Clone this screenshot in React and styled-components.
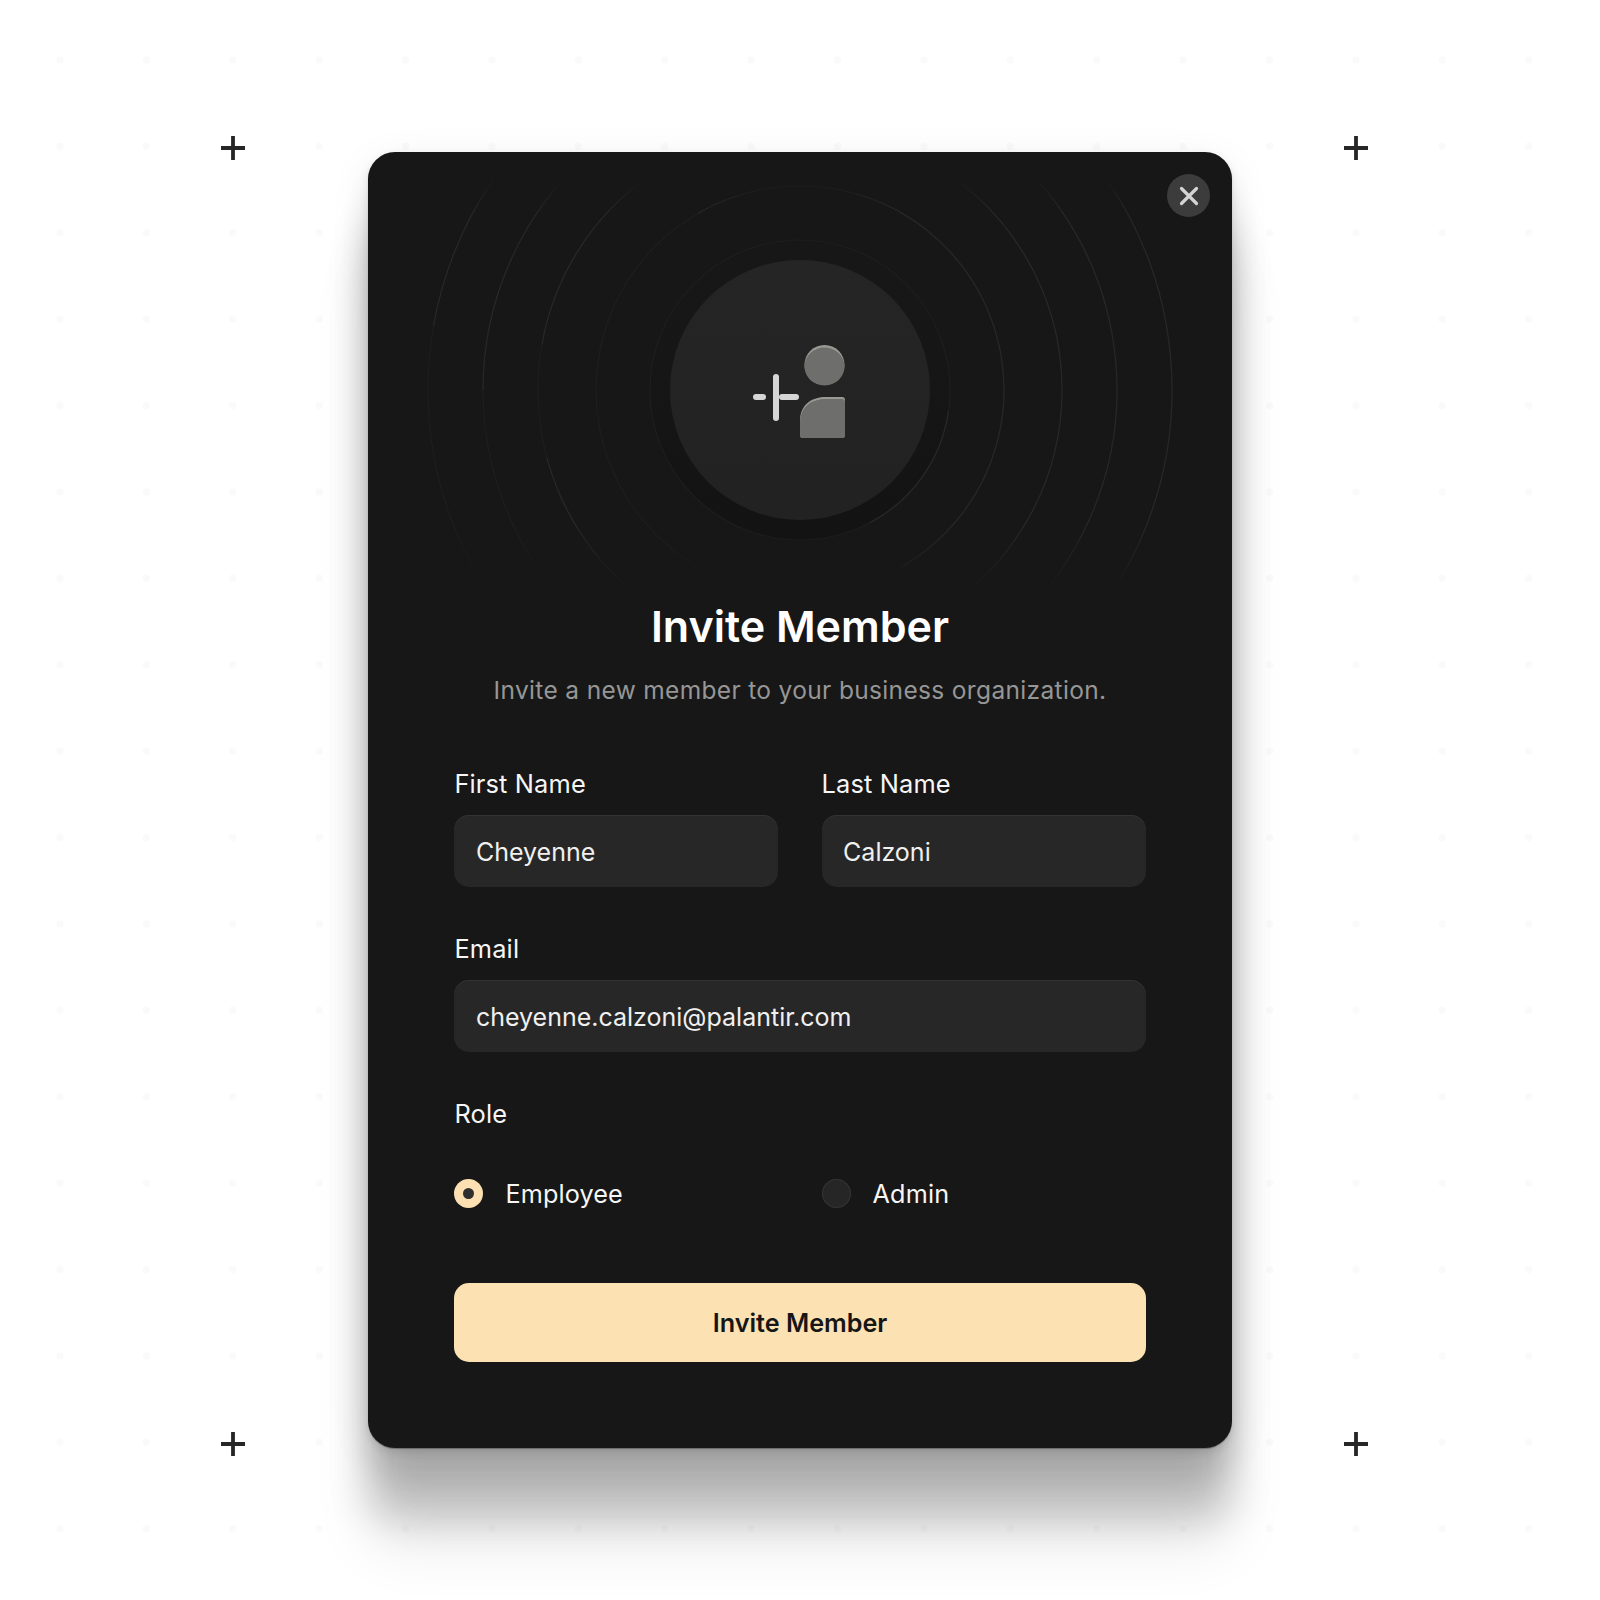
import React from "react";
import styled, { createGlobalStyle } from "styled-components";

const GlobalStyle = createGlobalStyle`
  html, body {
    margin: 0;
    padding: 0;
    background: #ffffff;
  }
`;

const Page = styled.div`
  position: relative;
  width: 1600px;
  height: 1600px;
  box-sizing: border-box;
  padding-top: 152px;
  display: flex;
  justify-content: center;
  align-items: flex-start;
  overflow: hidden;
  font-family: Inter, "Liberation Sans", sans-serif;
  background-color: #ffffff;
  background-image: radial-gradient(circle, #fafafa 3.5px, transparent 4px);
  background-size: 86.4px 86.4px;
  background-position: 16.8px 16.8px;
`;

const Corner = styled.svg`
  position: absolute;
  width: 26px;
  height: 26px;
  left: ${(p) => p.$x - 13}px;
  top: ${(p) => p.$y - 12.500}px;
`;

const Card = styled.section`
  position: relative;
  width: 864px;
  height: 1296px;
  box-sizing: border-box;
  padding: 0 86.4px 86px;
  display: flex;
  flex-direction: column;
  border-radius: 27px;
  background: #171717;
  box-shadow: 0 1px 1px rgba(0, 0, 0, 0.3), 0 4px 10px rgba(0, 0, 0, 0.1),
    0 10px 40px rgba(0, 0, 0, 0.08), 0 30px 30px rgba(0, 0, 0, 0.08),
    0 70px 40px rgba(0, 0, 0, 0.2), 0 100px 60px rgba(0, 0, 0, 0.08);
`;

const CloseButton = styled.button`
  position: absolute;
  top: 22px;
  right: 22px;
  width: 43px;
  height: 43px;
  padding: 0;
  border: none;
  border-radius: 50%;
  background: #3c3c3c;
  display: flex;
  align-items: center;
  justify-content: center;
`;

const Hero = styled.div`
  position: relative;
  height: 448px;
  margin: 0 -86.4px;
  display: flex;
  justify-content: center;
  padding-top: 108px;
  box-sizing: border-box;
`;

const Rings = styled.svg`
  position: absolute;
  left: 0;
  top: 0;
  width: 864px;
  height: 452px;
`;

const Avatar = styled.div`
  position: relative;
  width: 260px;
  height: 260px;
  border-radius: 50%;
  background: linear-gradient(180deg, #252525 0%, #222222 100%);
  display: flex;
  align-items: center;
  justify-content: center;
`;

const Title = styled.h1`
  margin: 0;
  text-align: center;
  font-size: 43px;
  line-height: 52px;
  font-weight: 600;
  color: #ffffff;
`;

const Subtitle = styled.p`
  margin: 19px 0 0;
  text-align: center;
  font-size: 24.5px;
  line-height: 38px;
  letter-spacing: 0.34px;
  color: #969696;
`;

const Form = styled.form`
  margin-top: 58px;
  display: flex;
  flex-direction: column;
  gap: 45px;
`;

const Row = styled.div`
  display: grid;
  grid-template-columns: 324px 324px;
  column-gap: 43.2px;
`;

const Field = styled.div`
  display: flex;
  flex-direction: column;
  gap: 14px;
`;

const Label = styled.label`
  font-size: 25.4px;
  line-height: 34px;
  font-weight: 400;
  letter-spacing: 0.15px;
  color: #f6f6f6;
`;

const Input = styled.div`
  height: 72px;
  box-sizing: border-box;
  padding: 2px 21.5px 0;
  display: flex;
  align-items: center;
  border-radius: 15px;
  background: #272727;
  box-shadow: inset 0 1px 0 #333333;
  font-size: 25px;
  color: #f0f0f0;
`;

const RadioOption = styled.div`
  display: flex;
  align-items: center;
  gap: 22px;
  font-size: 25.2px;
  font-weight: 400;
  letter-spacing: 0.15px;
  color: #f6f6f6;
`;

const RadioText = styled.span`
  padding-top: 2px;
`;

const RadioMark = styled.span`
  width: 29px;
  height: 29px;
  border-radius: 50%;
  box-sizing: border-box;
  background: ${(p) => (p.$checked ? "#fce0b1" : "#262626")};
  box-shadow: ${(p) => (p.$checked ? "none" : "inset 0 0 0 1px #333333")};
  display: flex;
  align-items: center;
  justify-content: center;
  &::after {
    content: "";
    display: ${(p) => (p.$checked ? "block" : "none")};
    width: 11px;
    height: 11px;
    border-radius: 50%;
    background: #2f2f2f;
  }
`;

const RadioRow = styled(Row)`
  margin-top: 44px;
  height: 36px;
  align-items: center;
`;

const SubmitButton = styled.button`
  height: 79px;
  margin-top: 27px;
  padding-top: 2px;
  border: none;
  border-radius: 15px;
  background: #fce1b2;
  font-family: inherit;
  font-size: 25.2px;
  font-weight: 600;
  color: #161616;
`;

const corners = [
  [233, 147],
  [1356, 147],
  [233, 1443],
  [1356, 1443],
];

// radius of each ring, then its brighter arcs as [startDeg, endDeg]
const rings = [
  { r: 150, arcs: [[8, 62]] },
  { r: 204, arcs: [[-120, -30], [-30, 60]] },
  { r: 262, arcs: [[-170, -125], [125, 165], [-60, 60]] },
  { r: 317, arcs: [[-180, -132], [-60, 50]] },
  { r: 372, arcs: [[-170, -120], [-60, 50]] },
];

const arcPath = (r, a, b) => {
  const cx = 432;
  const cy = 238;
  const rad = (d) => (d * Math.PI) / 180;
  const x1 = cx + r * Math.cos(rad(a));
  const y1 = cy + r * Math.sin(rad(a));
  const x2 = cx + r * Math.cos(rad(b));
  const y2 = cy + r * Math.sin(rad(b));
  return `M${x1} ${y1}A${r} ${r} 0 ${b - a > 180 ? 1 : 0} 1 ${x2} ${y2}`;
};

function RingArt() {
  return (
    <Rings viewBox="0 0 864 452" fill="none">
      <defs>
        <linearGradient id="ringFade" x1="0" y1="0" x2="0" y2="1">
          <stop offset="0.05" stopColor="#000" />
          <stop offset="0.14" stopColor="#fff" />
          <stop offset="0.82" stopColor="#fff" />
          <stop offset="0.98" stopColor="#000" />
        </linearGradient>
        <linearGradient id="innerDisc" x1="0" y1="0" x2="0" y2="1">
          <stop offset="0.2" stopColor="#171717" />
          <stop offset="1" stopColor="#131313" />
        </linearGradient>
        <mask id="ringMask">
          <rect width="864" height="452" fill="url(#ringFade)" />
        </mask>
      </defs>
      <circle cx="432" cy="238" r="150" fill="url(#innerDisc)" />
      <g mask="url(#ringMask)" strokeWidth="1.2">
        {rings.map((ring) => (
          <g key={ring.r}>
            <circle cx="432" cy="238" r={ring.r} stroke="#1e1e1e" />
            {ring.arcs.map(([a, b]) => (
              <path key={a} d={arcPath(ring.r, a, b)} stroke="#282828" />
            ))}
          </g>
        ))}
      </g>
    </Rings>
  );
}

function PersonPlus() {
  return (
    <svg width="110" height="100" viewBox="0 0 110 100" fill="none">
      <circle cx="79.500" cy="25" r="20" fill="#9a9a95" />
      <ellipse cx="79.500" cy="26.500" rx="20" ry="19" fill="#6e6e6c" />
      <path d="M55 95V80c0-14 11-23 25-23h17c2 0 3 1 3 3v35c0 2-1 3-3 3H58c-2 0-3-1-3-3z" fill="#9a9a95" />
      <path d="M55 95V82c0-14 11-23 25-23h17c2 0 3 1 3 3v33c0 2-1 3-3 3H58c-2 0-3-1-3-3z" fill="#6e6e6c" />
      <path d="M11 57h7M37 57h14" stroke="#d6d6d6" strokeWidth="6" strokeLinecap="round" />
      <path d="M31 37v41" stroke="#d6d6d6" strokeWidth="6" strokeLinecap="round" />
    </svg>
  );
}

export default function App() {
  return (
    <Page>
      <GlobalStyle />
      {corners.map(([x, y]) => (
        <Corner key={`${x}-${y}`} $x={x} $y={y} viewBox="0 0 26 26">
          <path d="M1 13h24M13 1v24" stroke="#262626" strokeWidth="3.8" />
        </Corner>
      ))}
      <Card>
        <CloseButton aria-label="Close">
          <svg width="20" height="20" viewBox="0 0 20 20" fill="none">
            <path d="M2.500 2.500l15 15M17.500 2.500l-15 15" stroke="#d4d4d4" strokeWidth="3.200" strokeLinecap="round" />
          </svg>
        </CloseButton>
        <Hero>
          <RingArt />
          <Avatar>
            <PersonPlus />
          </Avatar>
        </Hero>
        <Title>Invite Member</Title>
        <Subtitle>Invite a new member to your business organization.</Subtitle>
        <Form>
          <Row>
            <Field>
              <Label>First Name</Label>
              <Input>Cheyenne</Input>
            </Field>
            <Field>
              <Label>Last Name</Label>
              <Input>Calzoni</Input>
            </Field>
          </Row>
          <Field>
            <Label>Email</Label>
            <Input>cheyenne.calzoni@palantir.com</Input>
          </Field>
          <div>
            <Label>Role</Label>
            <RadioRow>
              <RadioOption>
                <RadioMark $checked />
                <RadioText>Employee</RadioText>
              </RadioOption>
              <RadioOption>
                <RadioMark />
                <RadioText>Admin</RadioText>
              </RadioOption>
            </RadioRow>
          </div>
          <SubmitButton type="button">Invite Member</SubmitButton>
        </Form>
      </Card>
    </Page>
  );
}
